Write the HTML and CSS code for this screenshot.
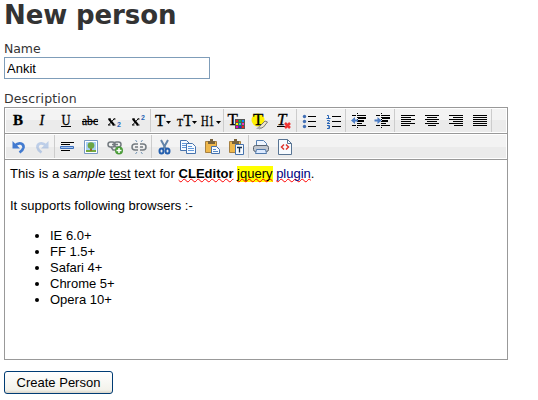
FILE: index.html
```html
<!DOCTYPE html>
<html lang="en">
<head>
<meta charset="utf-8">
<title>New person</title>
<link rel="stylesheet" href="styles.css">
</head>
<body>
<h1>New person</h1>
<form>
<label class="label" for="name">Name</label>
<input class="name" id="name" type="text" value="Ankit">
<label class="label description">Description</label>
<div class="editor">
  <div class="toolbar">
    <div class="group">
      <svg viewBox="0 0 24 24"><text class="glyph bold" x="7" y="16" textLength="10" lengthAdjust="spacingAndGlyphs">B</text></svg>
      <svg viewBox="0 0 24 24"><text class="glyph slant" x="9.500" y="16">I</text></svg>
      <svg viewBox="0 0 24 24"><text class="glyph" x="7.5" y="16" textLength="9" lengthAdjust="spacingAndGlyphs">U</text><path class="line" d="M7 17.5h10"/></svg>
      <svg viewBox="0 0 24 24"><text class="glyph small" x="4" y="16" textLength="16" lengthAdjust="spacingAndGlyphs">abc</text><path class="line" d="M4 12.5h16"/></svg>
      <svg viewBox="0 0 24 24"><path class="cross" d="M7 10l5 6"/><path class="cross thin" d="M12.500 9.500l-6 6.500M6 10h3m2.500 0h2M6 16h2.500m2 0h3"/><text class="script" x="15" y="18">2</text></svg>
      <svg viewBox="0 0 24 24"><path class="cross" d="M7 10l5 6"/><path class="cross thin" d="M12.500 9.500l-6 6.500M6 10h3m2.500 0h2M6 16h2.500m2 0h3"/><text class="script" x="15" y="11">2</text></svg>
    </div>
    <div class="group">
      <svg viewBox="0 0 24 24"><text class="glyph big" x="4" y="17">T</text><path d="M15 12h5l-2.500 3z"/></svg>
      <svg viewBox="0 0 24 24"><text class="glyph tiny" x="2" y="17">T</text><text class="glyph big" x="8.5" y="17" textLength="9" lengthAdjust="spacingAndGlyphs">T</text><path d="M17 12h5l-2.500 3z"/></svg>
      <svg viewBox="0 0 24 24"><text class="glyph head" x="2" y="17" textLength="13" lengthAdjust="spacingAndGlyphs">H1</text><path d="M17 12h5l-2.500 3z"/></svg>
    </div>
    <div class="group">
      <svg viewBox="0 0 24 24"><text class="glyph big" x="3.500" y="16">T</text><path fill="#555" d="M11 10h10v10h-10z"/><path fill="#e22" d="M12 11h2v2h-2z"/><path fill="#0c3" d="M15 11h2v2h-2z"/><path fill="#08f" d="M18 11h2v2h-2z"/><path fill="#fe0" d="M12 14h2v2h-2z"/><path fill="#0dd" d="M15 14h2v2h-2z"/><path fill="#e3b" d="M18 14h2v2h-2z"/><path fill="#e0b" d="M12 17h2v2h-2z"/><path fill="#22e" d="M15 17h2v2h-2z"/><path fill="#e22" d="M18 17h2v2h-2z"/></svg>
      <svg viewBox="0 0 24 24"><circle cx="10" cy="11" r="6.500" fill="#fff200"/><text class="glyph big" x="5" y="16">T</text><path d="M11 18l6-6 2.500 1-4 5-4 2z" fill="#eee5ca" stroke="#777"/><path d="M8 20l3-3 3 2-2 1z" fill="#aaa"/></svg>
      <svg viewBox="0 0 24 24"><text class="glyph big slant" x="5" y="16">T</text><path class="line" d="M5 17.500h8"/><path d="M13 14l5 5m0-5l-5 5" stroke="#e33" stroke-width="2.500"/></svg>
    </div>
    <div class="group">
      <svg viewBox="0 0 24 24"><path class="line" d="M11 7.500h8m-8 5h8m-8 5h8"/><g fill="#426fb5"><circle cx="7.500" cy="7.500" r="1.700"/><circle cx="7.500" cy="12.500" r="1.700"/><circle cx="7.500" cy="17.500" r="1.700"/></g></svg>
      <svg viewBox="0 0 24 24"><path class="line" d="M11 7.500h9m-9 5h9m-9 5h9"/><path class="number" d="M6 6.500h1.500v3m-2 0h4M6 11.500h2.500v1L6 14.500h3M6 16.500h2.500v1.500H7m1.500 0v1.500H6"/></svg>
    </div>
    <div class="group">
      <svg viewBox="0 0 24 24"><path class="line" d="M6 6.500h4m2 0h8M12 14.500h4M6 16.500h4m2 0h8"/><path class="thick" d="M12 9h8M12 12h6"/><path class="line dots" d="M11.500 4v16"/><path d="M5 11.500l4-3.500v2.500h3v2H9V15z" fill="#4b7cc5"/></svg>
      <svg viewBox="0 0 24 24"><path class="line" d="M6 6.500h4m2 0h8M12 14.500h4M6 16.500h4m2 0h8"/><path class="thick" d="M12 9h8M12 12h6"/><path class="line dots" d="M11.500 4v16"/><path d="M11.500 11.500l-4-3.500v2.500h-3v2h3V15z" fill="#4b7cc5"/></svg>
    </div>
    <div class="group">
      <svg viewBox="0 0 24 24"><path class="line" d="M6 6.500h14M6 8.500h10M6 10.500h14M6 12.500h10M6 14.500h14M6 16.500h9"/></svg>
      <svg viewBox="0 0 24 24"><path class="line" d="M6 6.500h14M8 8.500h10M6 10.500h14M8 12.500h10M6 14.500h14M9 16.500h8"/></svg>
      <svg viewBox="0 0 24 24"><path class="line" d="M6 6.500h14M10 8.500h10M6 10.500h14M10 12.500h10M6 14.500h14M11 16.500h9"/></svg>
      <svg viewBox="0 0 24 24"><path class="line" d="M6 6.500h14M6 8.500h14M6 10.500h14M6 12.500h14M6 14.500h14M6 16.500h14"/></svg>
    </div>
  </div>
  <div class="toolbar">
    <div class="group">
      <svg viewBox="0 0 24 24"><path class="undo" d="M9 10.500c4-4 9-2 8.500 2-.5 2.500-2 3.500-4 5"/><path d="M6.500 6v7.500H14z" fill="#437bd0"/></svg>
      <svg viewBox="0 0 24 24" class="disabled"><path class="undo" d="M16 10.500c-4-4-9-2-8.500 2 .5 2.500 2 3.500 4 5"/><path d="M18.500 6v7.500H11z" fill="#437bd0"/></svg>
    </div>
    <div class="group">
      <svg viewBox="0 0 24 24"><path class="line" d="M6 7.500h13M6 9.500h9M6 15.500h9"/><path d="M5.500 11.500h13v2h-13z" fill="#a8c7f0" stroke="#3d70bd"/></svg>
      <svg viewBox="0 0 24 24"><path d="M5.500 5.500h13v13h-13z" fill="#fff" stroke="#7799c5"/><path d="M7 7h10v10H7z" fill="#a9d0f5"/><path d="M7 15h10v2H7z" fill="#74a940"/><path d="M11 12h2v4h-2z" fill="#95692d"/><circle cx="12" cy="10.500" r="3.300" fill="#6ca644"/></svg>
      <svg viewBox="0 0 24 24"><g class="chain"><rect x="5" y="7" width="7" height="5" rx="2.500"/><rect x="11" y="7" width="7" height="5" rx="2.500"/><path d="M9 9.500h6M8 12l2 3h3"/></g><circle cx="16" cy="15.500" r="4" fill="#4a9c38"/><path d="M13.500 15.500h5m-2.500-2.500v5" stroke="#fff" stroke-width="1.500"/></svg>
      <svg viewBox="0 0 24 24"><g class="chain"><path d="M11 9H8q-3 0-3 3t3 3h3M13 9h3q3 0 3 3t-3 3h-3M8 12h3m2 0h3"/></g><path d="M8.500 5l1.500 2m5.500-2L14 7m-5.500 12l1.500-2m5.500 2L14 17" stroke="#7194b4"/></svg>
    </div>
    <div class="group">
      <svg viewBox="0 0 24 24"><path d="M9 5l5 9m2-9l-5 9" stroke="#6284a9" stroke-width="2"/><g class="cut"><ellipse cx="9.500" cy="16" rx="2" ry="2.500"/><ellipse cx="15.500" cy="16" rx="2" ry="2.500"/></g></svg>
      <svg viewBox="0 0 24 24"><g class="page"><path d="M4.500 5.500h6l3 3v7h-9z"/><path d="M10.500 8.500h6l3 3v7h-9z"/></g><path d="M6 8.500h4M6 10.500h4M6 12.500h4m2-1h4m-4 2h6m-6 2h6" stroke="#6398da"/></svg>
      <svg viewBox="0 0 24 24"><path d="M5.500 6.500h11v11h-11z" class="board"/><path d="M8 6h2V4h3v2h2v3H8z" fill="#79633b"/><path d="M11.500 11.500h5l3 3v4h-8z" class="page"/><path d="M13 14.500h3m-3 2h5" stroke="#5689c7"/></svg>
      <svg viewBox="0 0 24 24"><path d="M5.500 6.500h11v11h-11z" class="board"/><path d="M8 6h2V4h3v2h2v3H8z" fill="#79633b"/><path d="M11.500 9.500h8v10h-8z" class="page"/><path d="M13 12.500h5m-2.500 0v5" stroke="#173250" stroke-width="1.300"/></svg>
    </div>
    <div class="group plain">
      <svg viewBox="0 0 24 24"><path d="M7.500 11V5.500h7l3 3V11" fill="#eef5ff" stroke="#5580b3"/><rect x="4.500" y="10.500" width="15" height="6" rx="2" fill="#c1c7d0" stroke="#59636f"/><path d="M7.500 14.500h9l1 4h-11z" fill="#dceaff" stroke="#5079ac"/></svg>
      <svg viewBox="0 0 24 24"><path d="M5.500 4.500h9l4 4v11h-13z" class="page code"/><path d="M14.500 4.500v4h4" fill="none" stroke="#587493"/><path d="M11 9.500L8.500 12l2.500 2.500m2-5l2.500 2.500-2.500 2.500" stroke="#dc352e" stroke-width="1.500" fill="none"/></svg>
    </div>
  </div>
  <div class="content">
    <p><span class="opening">This is a <em>sample</em> <u>test</u> text for </span><b class="spell">CLEditor</b> <span class="spell mark">jquery</span> <span class="spell blue">plugin</span>.</p>
    <p class="supports">It supports following browsers :-</p>
    <ul><li>IE 6.0+</li><li>FF 1.5+</li><li>Safari 4+</li><li>Chrome 5+</li><li>Opera 10+</li></ul>
  </div>
</div>
<button class="submit" type="button">Create Person</button>
</form>
</body>
</html>
```
FILE: styles.css
```css
* { box-sizing: border-box; }
body { margin: 0; padding: 0 4px; background: #fff; color: #333; font: 13px/18px "DejaVu Sans", sans-serif; overflow: hidden; }
h1 { margin: 0 0 10px; font: bold 26px/30px "DejaVu Sans", sans-serif; letter-spacing: -.1px; width: 190px; }
.label { display: block; height: 17px; line-height: 17px; font-size: 12.5px; width: max-content; letter-spacing: -.1px; }
.name { display: block; width: 206px; height: 22px; margin: 0 0 11px; padding: 1px 2px; border: 1px solid #7f9db9; border-radius: 0; font: 13px "Liberation Sans", sans-serif; color: #000; outline: 0; }
.description { letter-spacing: .15px; }
.editor { width: 504px; height: 253px; border: 1px solid #999; }
.toolbar { display: flex; height: 26px; padding: 1px; border-bottom: 1px solid #999; background: linear-gradient(#f3f3f3 50%, #ebebeb 50%) content-box; }
.group { display: flex; border-right: 1px solid #ccc; }
.plain { border: 0; }
svg { display: block; width: 24px; height: 24px; }
.glyph { font: 14px "Liberation Serif", serif; stroke: #000; stroke-width: .3px; }
.bold { font-weight: bold; }
.slant { font-style: italic; }
.big { font-size: 17px; }
.small { font-size: 12px; }
.tiny { font-size: 10px; }
.head { font-size: 14px; }
.cross { fill: none; stroke: #000; stroke-width: 2px; }
.thin { stroke-width: 1px; }
.script { font: bold 7px "Liberation Sans", sans-serif; fill: #2864b4; }
.number { fill: none; stroke: #2864b4; stroke-width: 1px; }
.line { fill: none; stroke: #000; shape-rendering: crispEdges; }
.thick { stroke: #000; stroke-width: 2; shape-rendering: crispEdges; }
.dots { stroke-dasharray: 1 1; }
.undo { fill: none; stroke: #437bd0; stroke-width: 2.7px; }
.disabled { opacity: .3; }
.chain { fill: none; stroke: #747b80; stroke-width: 1.5px; }
.cut { fill: none; stroke: #245fae; stroke-width: 2px; }
.page { fill: #f7fbff; stroke: #4773ad; }
.code { stroke: #587493; }
.board { fill: #efb84c; stroke: #a78142; }
.content { padding: 6px 5px; color: #000; font: 13px/16px "Liberation Sans", sans-serif; }
p { margin: 0 0 16px; white-space: nowrap; }
.opening { letter-spacing: .1px; }
.spell { text-decoration: underline wavy #f00 .7px; text-underline-offset: 0; text-decoration-skip-ink: none; }
.mark { background: #ff0; padding-bottom: 1px; }
.blue { color: #000080; }
ul { margin: -2px 0 0 40px; padding: 0; }
.submit { display: block; width: 109px; height: 23px; margin: 11px 0 0 0; padding: 0; border: 1px solid #003c74; border-radius: 3px; background: linear-gradient(#fff, #f3f2eb 85%, #d9d4c8); font: 13px "Liberation Sans", sans-serif; color: #000; }
```
